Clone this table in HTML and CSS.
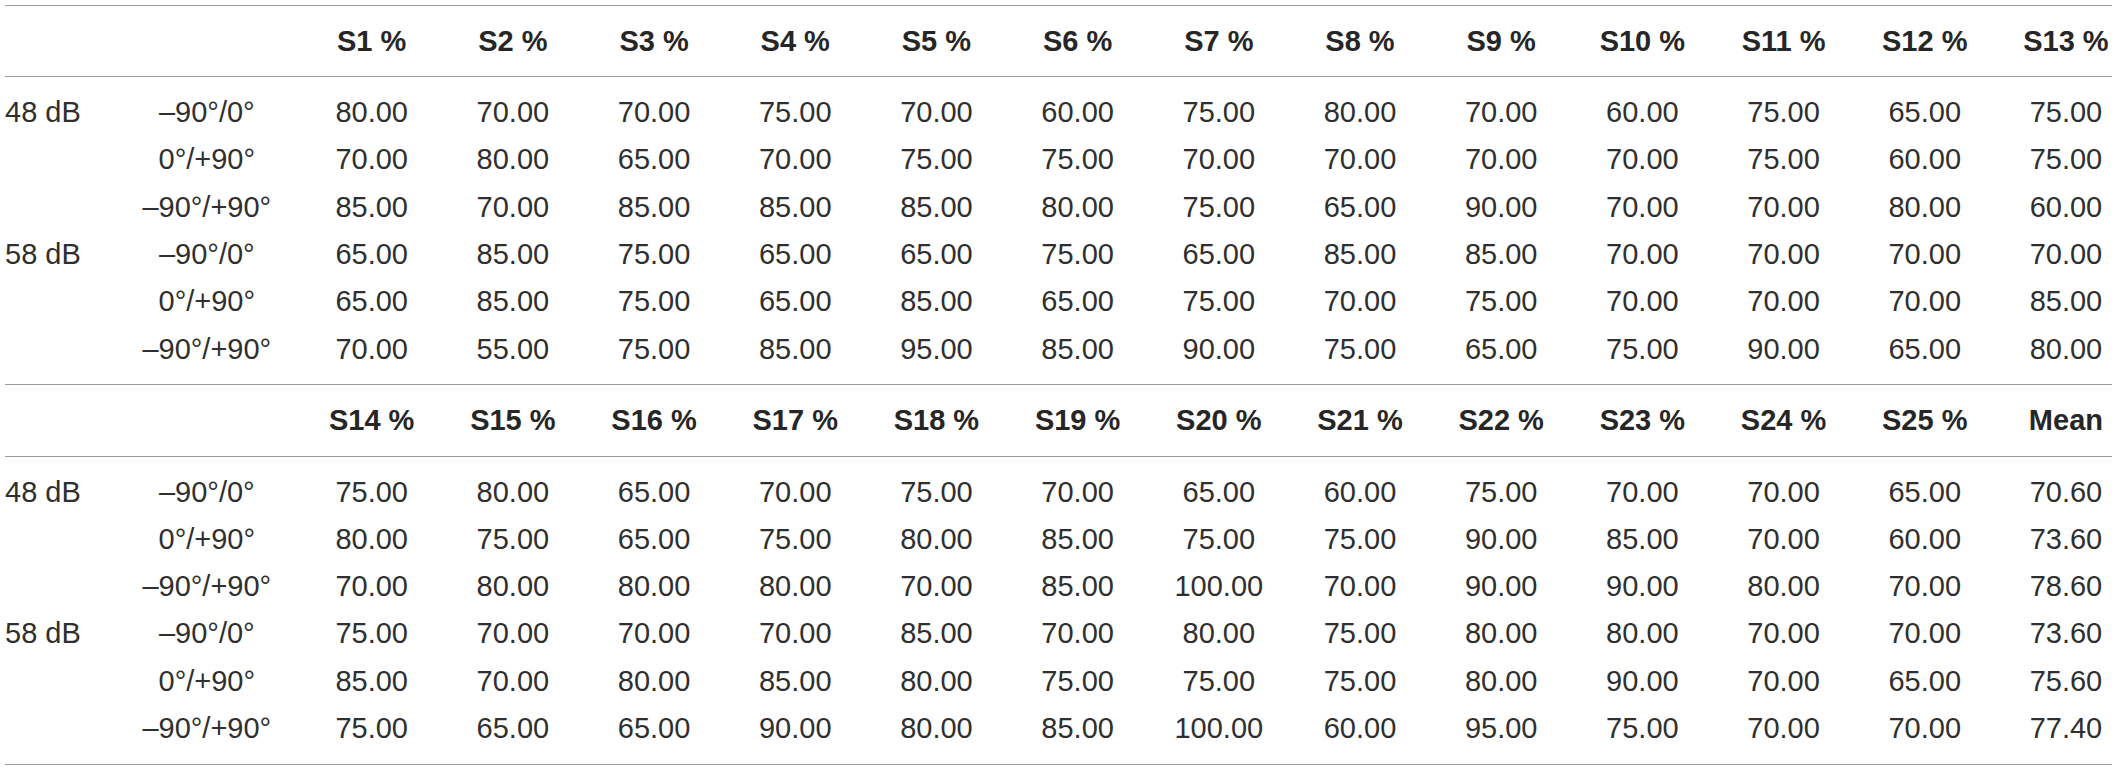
FILE: index.html
```html
<!DOCTYPE html>
<html lang="en">
<head>
<meta charset="utf-8">
<title>Table</title>
<link rel="stylesheet" href="styles.css">
</head>
<body>
<div class="table">
  <div class="section">
    <div class="row head">
      <span class="c1"></span><span class="c2"></span>
      <span class="cd">S1 %</span><span class="cd">S2 %</span><span class="cd">S3 %</span><span class="cd">S4 %</span><span class="cd">S5 %</span><span class="cd">S6 %</span><span class="cd">S7 %</span><span class="cd">S8 %</span><span class="cd">S9 %</span><span class="cd">S10 %</span><span class="cd">S11 %</span><span class="cd">S12 %</span><span class="cd">S13 %</span>
    </div>
    <div class="body">
      <div class="row"><span class="c1">48 dB</span><span class="c2">–90°/0°</span><span class="cd">80.00</span><span class="cd">70.00</span><span class="cd">70.00</span><span class="cd">75.00</span><span class="cd">70.00</span><span class="cd">60.00</span><span class="cd">75.00</span><span class="cd">80.00</span><span class="cd">70.00</span><span class="cd">60.00</span><span class="cd">75.00</span><span class="cd">65.00</span><span class="cd">75.00</span></div>
      <div class="row"><span class="c1"></span><span class="c2">0°/+90°</span><span class="cd">70.00</span><span class="cd">80.00</span><span class="cd">65.00</span><span class="cd">70.00</span><span class="cd">75.00</span><span class="cd">75.00</span><span class="cd">70.00</span><span class="cd">70.00</span><span class="cd">70.00</span><span class="cd">70.00</span><span class="cd">75.00</span><span class="cd">60.00</span><span class="cd">75.00</span></div>
      <div class="row"><span class="c1"></span><span class="c2">–90°/+90°</span><span class="cd">85.00</span><span class="cd">70.00</span><span class="cd">85.00</span><span class="cd">85.00</span><span class="cd">85.00</span><span class="cd">80.00</span><span class="cd">75.00</span><span class="cd">65.00</span><span class="cd">90.00</span><span class="cd">70.00</span><span class="cd">70.00</span><span class="cd">80.00</span><span class="cd">60.00</span></div>
      <div class="row"><span class="c1">58 dB</span><span class="c2">–90°/0°</span><span class="cd">65.00</span><span class="cd">85.00</span><span class="cd">75.00</span><span class="cd">65.00</span><span class="cd">65.00</span><span class="cd">75.00</span><span class="cd">65.00</span><span class="cd">85.00</span><span class="cd">85.00</span><span class="cd">70.00</span><span class="cd">70.00</span><span class="cd">70.00</span><span class="cd">70.00</span></div>
      <div class="row"><span class="c1"></span><span class="c2">0°/+90°</span><span class="cd">65.00</span><span class="cd">85.00</span><span class="cd">75.00</span><span class="cd">65.00</span><span class="cd">85.00</span><span class="cd">65.00</span><span class="cd">75.00</span><span class="cd">70.00</span><span class="cd">75.00</span><span class="cd">70.00</span><span class="cd">70.00</span><span class="cd">70.00</span><span class="cd">85.00</span></div>
      <div class="row"><span class="c1"></span><span class="c2">–90°/+90°</span><span class="cd">70.00</span><span class="cd">55.00</span><span class="cd">75.00</span><span class="cd">85.00</span><span class="cd">95.00</span><span class="cd">85.00</span><span class="cd">90.00</span><span class="cd">75.00</span><span class="cd">65.00</span><span class="cd">75.00</span><span class="cd">90.00</span><span class="cd">65.00</span><span class="cd">80.00</span></div>
    </div>
  </div>
  <div class="section">
    <div class="row head">
      <span class="c1"></span><span class="c2"></span>
      <span class="cd">S14 %</span><span class="cd">S15 %</span><span class="cd">S16 %</span><span class="cd">S17 %</span><span class="cd">S18 %</span><span class="cd">S19 %</span><span class="cd">S20 %</span><span class="cd">S21 %</span><span class="cd">S22 %</span><span class="cd">S23 %</span><span class="cd">S24 %</span><span class="cd">S25 %</span><span class="cd">Mean</span>
    </div>
    <div class="body">
      <div class="row"><span class="c1">48 dB</span><span class="c2">–90°/0°</span><span class="cd">75.00</span><span class="cd">80.00</span><span class="cd">65.00</span><span class="cd">70.00</span><span class="cd">75.00</span><span class="cd">70.00</span><span class="cd">65.00</span><span class="cd">60.00</span><span class="cd">75.00</span><span class="cd">70.00</span><span class="cd">70.00</span><span class="cd">65.00</span><span class="cd">70.60</span></div>
      <div class="row"><span class="c1"></span><span class="c2">0°/+90°</span><span class="cd">80.00</span><span class="cd">75.00</span><span class="cd">65.00</span><span class="cd">75.00</span><span class="cd">80.00</span><span class="cd">85.00</span><span class="cd">75.00</span><span class="cd">75.00</span><span class="cd">90.00</span><span class="cd">85.00</span><span class="cd">70.00</span><span class="cd">60.00</span><span class="cd">73.60</span></div>
      <div class="row"><span class="c1"></span><span class="c2">–90°/+90°</span><span class="cd">70.00</span><span class="cd">80.00</span><span class="cd">80.00</span><span class="cd">80.00</span><span class="cd">70.00</span><span class="cd">85.00</span><span class="cd">100.00</span><span class="cd">70.00</span><span class="cd">90.00</span><span class="cd">90.00</span><span class="cd">80.00</span><span class="cd">70.00</span><span class="cd">78.60</span></div>
      <div class="row"><span class="c1">58 dB</span><span class="c2">–90°/0°</span><span class="cd">75.00</span><span class="cd">70.00</span><span class="cd">70.00</span><span class="cd">70.00</span><span class="cd">85.00</span><span class="cd">70.00</span><span class="cd">80.00</span><span class="cd">75.00</span><span class="cd">80.00</span><span class="cd">80.00</span><span class="cd">70.00</span><span class="cd">70.00</span><span class="cd">73.60</span></div>
      <div class="row"><span class="c1"></span><span class="c2">0°/+90°</span><span class="cd">85.00</span><span class="cd">70.00</span><span class="cd">80.00</span><span class="cd">85.00</span><span class="cd">80.00</span><span class="cd">75.00</span><span class="cd">75.00</span><span class="cd">75.00</span><span class="cd">80.00</span><span class="cd">90.00</span><span class="cd">70.00</span><span class="cd">65.00</span><span class="cd">75.60</span></div>
      <div class="row"><span class="c1"></span><span class="c2">–90°/+90°</span><span class="cd">75.00</span><span class="cd">65.00</span><span class="cd">65.00</span><span class="cd">90.00</span><span class="cd">80.00</span><span class="cd">85.00</span><span class="cd">100.00</span><span class="cd">60.00</span><span class="cd">95.00</span><span class="cd">75.00</span><span class="cd">70.00</span><span class="cd">70.00</span><span class="cd">77.40</span></div>
    </div>
  </div>
</div>
</body>
</html>
```

FILE: styles.css
```css
html, body {
  background: #ffffff;
}

body {
  margin: 0;
  padding: 5px 5px 0 5px;
  font-family: "Liberation Sans", Arial, sans-serif;
  font-size: 29px;
  color: #2f2f2f;
}

.table {
  width: 2107px;
  border-top: 1px solid #9c9c9c;
}

.head {
  padding: 11.6px 0;
  border-bottom: 1px solid #9c9c9c;
  font-weight: bold;
  color: #262626;
}

.body {
  padding: 11.6px 0;
  border-bottom: 1px solid #9c9c9c;
}

.row {
  display: grid;
  grid-template-columns: 132px 139.6px repeat(13, 141.2px);
  line-height: 47.3px;
  white-space: nowrap;
}

.c1 {
  text-align: left;
}

.c2 {
  text-align: center;
}

.cd {
  padding-left: 49px;
  text-align: center;
}
```
